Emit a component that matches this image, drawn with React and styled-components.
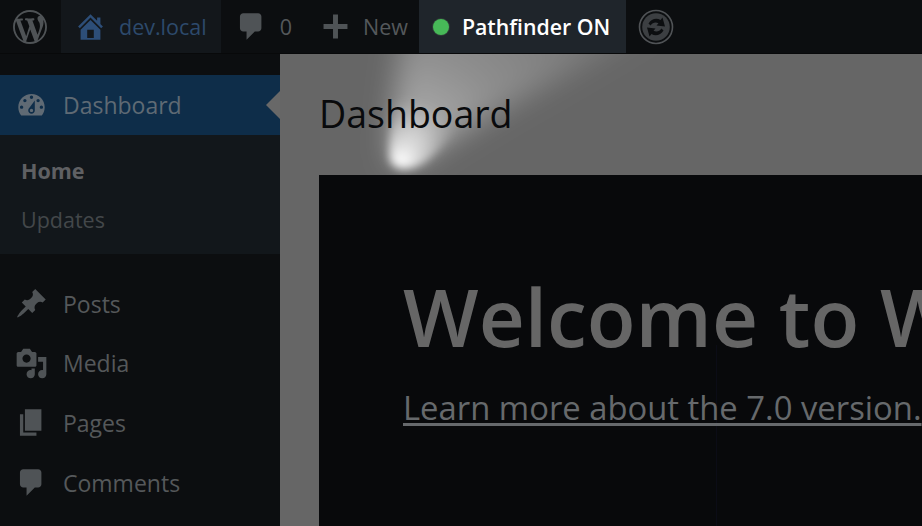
import React from "react";
import styled, { createGlobalStyle } from "styled-components";

const Global = createGlobalStyle`
  html, body { margin: 0; padding: 0; height: 100%; background: #666; overflow: hidden; }
  #root { height: 100%; }
`;

const Page = styled.div`
  width: 922px; height: 526px; overflow: hidden; position: relative;
  display: flex; flex-direction: column;
  font-family: "Open Sans", "Noto Sans", sans-serif;
  background: #666;
`;
const TopBar = styled.header`
  height: 53px; flex: none; display: flex; align-items: stretch;
  background: #0c0e10; border-bottom: 1px solid #08090a; position: relative; z-index: 3;
`;
const BarItem = styled.div`
  display: flex; align-items: center; gap: ${p => p.$gap ?? 13}px;
  padding: ${p => p.$pad ?? "0 13px"};
  background: ${p => p.$bg ?? "transparent"};
  color: ${p => p.$color ?? "#54585b"};
  font-size: ${p => p.$size ?? 21.5}px; font-weight: ${p => p.$weight ?? 400};
  white-space: nowrap;
`;
const Glyph = styled.svg`
  width: ${p => p.$size ?? 33}px; height: ${p => p.$size ?? 33}px; flex: none;
  fill: ${p => p.$color ?? "#4f5356"};
`;
const Dot = styled.span`
  width: 16px; height: 16px; border-radius: 50%; background: #47b958;
  box-shadow: 0 0 0 1px #2f3a38;
`;
const Body = styled.div`flex: 1; display: flex; min-height: 0;`;
const Sidebar = styled.nav`
  width: 280px; flex: none; background: #0c0e10; padding-top: 21px;
  position: relative; z-index: 2;
`;
const ActiveItem = styled.div`
  height: 60px; background: #0e2d49; display: flex; align-items: center;
  gap: 15px; padding-left: 15px; color: #5f6a74; font-size: 23px; position: relative;
  &::after {
    content: ""; position: absolute; right: 0; top: 50%; margin-top: -14px;
    border: 14px solid transparent; border-left-width: 0; border-right-color: #686868;
  }
`;
const SubMenu = styled.div`
  height: 119px; background: #12171b; box-sizing: border-box; padding-top: 11px;
  margin-bottom: 20px;
`;
const SubItem = styled.div`
  height: 49px; display: flex; align-items: center; padding-left: 21px;
  font-size: 21.5px; font-weight: ${p => p.$on ? 700 : 400};
  color: ${p => p.$on ? "#5f6063" : "#43474a"};
`;
const MenuItem = styled.div`
  height: 59.6px; display: flex; align-items: center; gap: 15px; padding-left: 15px;
  color: #55585a; font-size: 23px;
`;
const Main = styled.main`
  flex: 1; min-width: 0; padding: 36px 0 0 39px; position: relative; overflow: hidden;
`;
const Glow = styled.svg`
  position: absolute; left: 0; top: 0; width: 642px; height: 472px; pointer-events: none;
`;
const Title = styled.h1`
  margin: 0; height: 85px; font-size: 37.5px; font-weight: 400; color: #090a0c;
  line-height: 48px; position: relative; white-space: nowrap;
`;
const Panel = styled.section`
  height: 400px; background: #08090b; padding: 86px 0 0 84px; position: relative; white-space: nowrap;
`;
const Heading = styled.h2`
  margin: 0; font-size: 80px; line-height: 110px; font-weight: 600; color: #666; position: relative;
`;
const LearnLink = styled.a`
  display: block; font-size: 32.8px; line-height: 46px; margin-top: 14px; color: #66696c; position: relative;
  text-decoration: underline; text-underline-offset: 3px;
`;
const Hairline = styled.span`
  position: absolute; left: 397px; top: 170px; bottom: 0; width: 1px; background: #0b0c16;
`;

const P = {
  wp: "M20 10c0-5.51-4.49-10-10-10C4.48 0 0 4.49 0 10c0 5.52 4.48 10 10 10 5.51 0 10-4.48 10-10zM7.78 15.37L4.37 6.22c.55-.02 1.17-.08 1.17-.08.5-.06.44-1.13-.06-1.11 0 0-1.45.11-2.37.11-.18 0-.37 0-.58-.01C4.12 2.69 6.87 1.11 10 1.11c2.33 0 4.45.87 6.05 2.34-.68-.11-1.65.39-1.65 1.58 0 .74.45 1.36.9 2.1.35.61.55 1.36.55 2.46 0 1.49-1.4 5-1.4 5l-3.03-8.37c.54-.02.82-.17.82-.17.5-.05.44-1.25-.06-1.22 0 0-1.44.12-2.38.12-.87 0-2.33-.12-2.33-.12-.5-.03-.56 1.2-.06 1.22l.92.08 1.26 3.41zM17.41 10c.24-.64.74-1.87.43-4.25.7 1.29 1.05 2.71 1.05 4.25 0 3.29-1.73 6.24-4.4 7.78.97-2.59 1.94-5.2 2.92-7.78zM6.1 18.09C3.12 16.65 1.11 13.53 1.11 10c0-1.3.23-2.48.72-3.59C3.25 10.3 4.67 14.2 6.1 18.09zm4.03-6.63l2.58 6.98c-.86.29-1.76.45-2.71.45-.79 0-1.57-.11-2.29-.33.81-2.38 1.62-4.74 2.42-7.1z",
  home: "M16 8.5l1.53 1.53-1.06 1.06L10 4.62l-6.47 6.47-1.06-1.06L10 2.5l4 4v-2h2v4zm-6-2.46l6 5.99V18H4v-5.97zM12 17v-5H8v5h4z",
  comment: "M5 2h9c1.1 0 2 .9 2 2v7c0 1.1-.9 2-2 2h-2l-5 5v-5H5c-1.1 0-2-.9-2-2V4c0-1.1.9-2 2-2z",
  plus: "M17.25 8.5v3H11.5v5.75h-3V11.5H2.75v-3H8.5V2.75h3V8.5z",
  dash: "M3.76 16h12.48c1.1-1.37 1.76-3.11 1.76-5 0-4.42-3.58-8-8-8s-8 3.58-8 8c0 1.89.66 3.63 1.76 5zM10 4c.55 0 1 .45 1 1s-.45 1-1 1-1-.45-1-1 .45-1 1-1zM6 6c.55 0 1 .45 1 1s-.45 1-1 1-1-.45-1-1 .45-1 1-1zm8 0c.55 0 1 .45 1 1s-.45 1-1 1-1-.45-1-1 .45-1 1-1zm-5.37 5.55L12 7v6c0 1.1-.9 2-2 2s-2-.9-2-2c0-.57.24-1.08.63-1.45zM4 10c.55 0 1 .45 1 1s-.45 1-1 1-1-.45-1-1 .45-1 1-1zm12 0c.55 0 1 .45 1 1s-.45 1-1 1-1-.45-1-1 .45-1 1-1zm-5 3c0-.55-.45-1-1-1s-1 .45-1 1 .45 1 1 1 1-.45 1-1z",
  pin: "M10.44 3.02l1.82-1.82 6.36 6.35-1.83 1.82c-1.05-.68-2.48-.57-3.41.36l-.75.75c-.92.93-1.04 2.35-.35 3.41l-1.83 1.82-2.41-2.41-2.8 2.79c-.42.42-3.38 2.71-3.8 2.29s1.86-3.39 2.28-3.81l2.79-2.79L4.1 9.36l1.83-1.82c1.05.69 2.48.57 3.4-.36l.75-.75c.93-.92 1.05-2.35.36-3.41z",
  media: "M13 11V4c0-.55-.45-1-1-1h-1.67L9 1H5L3.67 3H2c-.55 0-1 .45-1 1v7c0 .55.45 1 1 1h10c.55 0 1-.45 1-1zM7 4.5c1.38 0 2.5 1.12 2.5 2.5S8.38 9.5 7 9.5 4.5 8.38 4.5 7 5.62 4.5 7 4.5zM14 6h5v10.5c0 1.38-1.12 2.5-2.5 2.5S14 17.88 14 16.5s1.12-2.5 2.5-2.5c.17 0 .34.02.5.05V9h-3V6zm-4 8.05V13h2v3.5c0 1.38-1.12 2.5-2.5 2.5S7 17.88 7 16.5 8.12 14 9.5 14c.17 0 .34.02.5.05z",
  page: "M6 15V2h10v13H6zm-1 1h8v2H3V5h2v11z",
};
const Icon = ({ d, ...rest }) => (
  <Glyph viewBox="0 0 20 20" {...rest}><path d={d} /></Glyph>
);

const SyncLogo = () => (
  <Glyph viewBox="0 0 36 36" $size={36}>
    <circle cx="18" cy="18" r="16.5" fill="none" stroke="#505356" strokeWidth="1.6" />
    <circle cx="18" cy="18" r="13.8" fill="#3c3f42" />
    <path d="M10.5 14.5 C13 10 18.5 8.5 22.5 11 L24.5 8.5 L27 17.5 L18.5 16.5 L20.5 14.2 C17.5 12.8 14.5 13.5 12.5 16.5 Z" fill="#0c0e10" />
    <path d="M25.5 21.5 C23 26 17.5 27.5 13.5 25 L11.5 27.5 L9 18.5 L17.5 19.5 L15.5 21.8 C18.5 23.2 21.5 22.5 23.5 19.5 Z" fill="#0c0e10" />
  </Glyph>
);

const menu = [["Posts", P.pin], ["Media", P.media], ["Pages", P.page], ["Comments", P.comment]];

export default function App() {
  return (
    <Page>
      <Global />
      <TopBar>
        <BarItem $pad="0 14px 0 13px"><Icon d={P.wp} $size={34} /></BarItem>
        <BarItem $bg="#13171b" $color="#2d4a6c" $gap={12} $pad="0 14px 0 13px"><Icon d={P.home} $color="#2d4e78" $size={33} />dev.local</BarItem>
        <BarItem $pad="0 14px 0 14px" $gap={12}><Icon d={P.comment} />0</BarItem>
        <BarItem $pad="0 11px 0 13px" $gap={11}><Icon d={P.plus} />New</BarItem>
        <BarItem $bg="#1f252b" $color="#ffffff" $weight={600} $size={21.3} $pad="0 16px 0 14px" $gap={13}><Dot />Pathfinder ON</BarItem>
        <BarItem $pad="0 12px 0 12px"><SyncLogo /></BarItem>
      </TopBar>
      <Body>
        <Sidebar>
          <ActiveItem><Icon d={P.dash} $color="#5f6a74" />Dashboard</ActiveItem>
          <SubMenu>
            <SubItem $on>Home</SubItem>
            <SubItem>Updates</SubItem>
          </SubMenu>
          {menu.map(([label, d]) => (
            <MenuItem key={label}><Icon d={d} />{label}</MenuItem>
          ))}
        </Sidebar>
        <Main>
          <Glow viewBox="0 0 642 472">
            <defs>
              <filter id="soft" x="-30%" y="-30%" width="160%" height="160%"><feGaussianBlur stdDeviation="14" /></filter>
              <filter id="mid" x="-30%" y="-30%" width="160%" height="160%"><feGaussianBlur stdDeviation="4" /></filter>
              <radialGradient id="cone" gradientUnits="userSpaceOnUse" cx="122" cy="106" r="320">
                <stop offset="0" stopColor="#fff" stopOpacity=".6" />
                <stop offset=".15" stopColor="#fff" stopOpacity=".42" />
                <stop offset=".35" stopColor="#fff" stopOpacity=".26" />
                <stop offset=".65" stopColor="#fff" stopOpacity=".14" />
                <stop offset="1" stopColor="#fff" stopOpacity=".02" />
              </radialGradient>
              <radialGradient id="tip" gradientUnits="userSpaceOnUse" cx="122" cy="106" r="62">
                <stop offset="0" stopColor="#fff" stopOpacity="1" />
                <stop offset=".3" stopColor="#fff" stopOpacity=".6" />
                <stop offset=".7" stopColor="#fff" stopOpacity=".2" />
                <stop offset="1" stopColor="#fff" stopOpacity="0" />
              </radialGradient>
            </defs>
            <path d="M124 -40 C 116 20 112 60 112 98 C 112 112 130 112 146 100 C 210 60 290 20 400 -40 Z" fill="url(#cone)" filter="url(#soft)" />
            <path d="M118 30 C 112 60 109 85 109 100 C 108 118 130 120 148 106 C 165 92 180 75 190 50 Z" fill="url(#tip)" filter="url(#mid)" />
          </Glow>
          <Title>Dashboard</Title>
          <Panel>
            <Hairline />
            <Heading>Welcome to WordPress</Heading>
            <LearnLink>Learn more about the 7.0 version.</LearnLink>
          </Panel>
        </Main>
      </Body>
    </Page>
  );
}
